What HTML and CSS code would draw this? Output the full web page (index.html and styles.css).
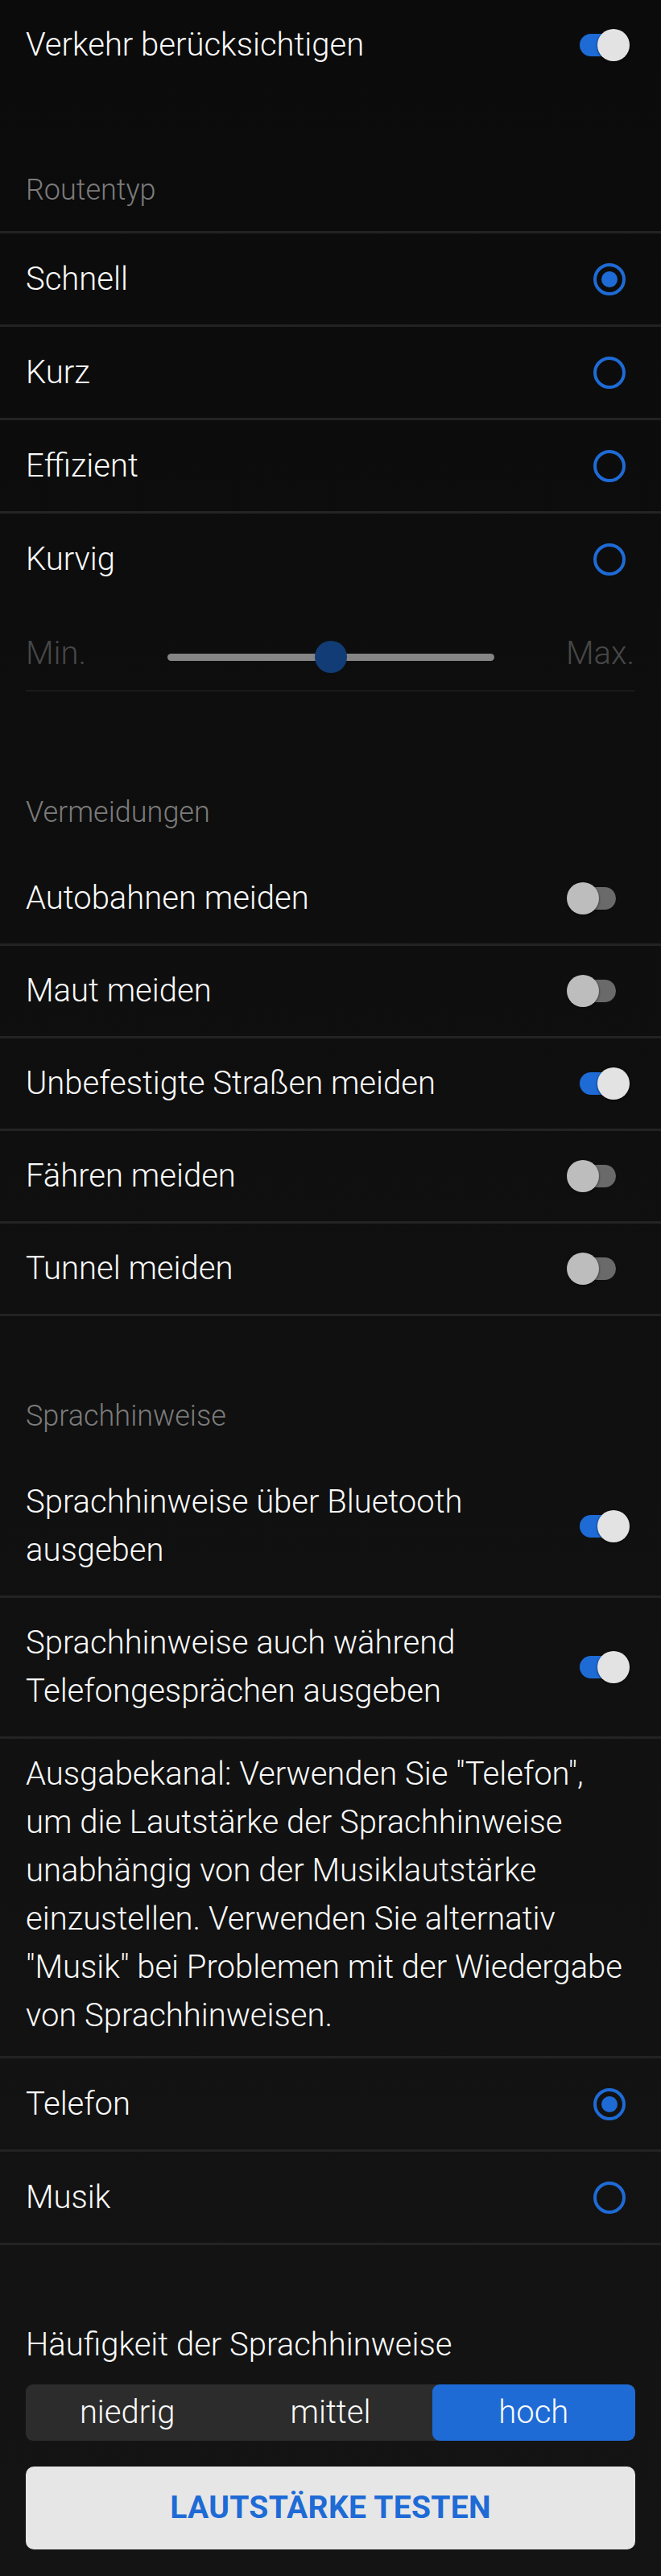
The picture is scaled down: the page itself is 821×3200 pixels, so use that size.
FILE: index.html
```html
<!doctype html>
<html lang="de">
<head>
    <meta charset="UTF-8">
    <title>Routeneinstellungen</title>
    <link rel="stylesheet" href="styles.css">
</head>
<body>
<div class="page">
    <!-- Verkehr -->
    <div class="row top-row">
        <span>Verkehr berücksichtigen</span>
        <span class="switch on"></span>
    </div>

    <!-- Routentyp -->
    <div class="section-title">Routentyp</div>
    <div class="route-list">
        <div class="row"><span>Schnell</span><span class="radio checked"></span></div>
        <div class="row"><span>Kurz</span><span class="radio"></span></div>
        <div class="row"><span>Effizient</span><span class="radio"></span></div>
        <div class="row"><span>Kurvig</span><span class="radio"></span></div>
    </div>
    <div class="slider-row">
        <span class="slider-label">Min.</span>
        <div class="slider"><span class="slider-thumb"></span></div>
        <span class="slider-label max">Max.</span>
    </div>

    <!-- Vermeidungen -->
    <div class="section-title">Vermeidungen</div>
    <div class="toggle-list">
        <div class="row"><span>Autobahnen meiden</span><span class="switch"></span></div>
        <div class="row"><span>Maut meiden</span><span class="switch"></span></div>
        <div class="row"><span>Unbefestigte Straßen meiden</span><span class="switch on"></span></div>
        <div class="row"><span>Fähren meiden</span><span class="switch"></span></div>
        <div class="row"><span>Tunnel meiden</span><span class="switch"></span></div>
    </div>

    <!-- Sprachhinweise -->
    <div class="section-title">Sprachhinweise</div>
    <div class="voice-list">
        <div class="row tall"><span>Sprachhinweise über Bluetooth<br>ausgeben</span><span class="switch on"></span></div>
        <div class="row tall"><span>Sprachhinweise auch während<br>Telefongesprächen ausgeben</span><span class="switch on"></span></div>
        <p class="note">Ausgabekanal: Verwenden Sie "Telefon",<br>um die Lautstärke der Sprachhinweise<br>unabhängig von der Musiklautstärke<br>einzustellen. Verwenden Sie alternativ<br>"Musik" bei Problemen mit der Wiedergabe<br>von Sprachhinweisen.</p>
        <div class="row"><span>Telefon</span><span class="radio checked"></span></div>
        <div class="row"><span>Musik</span><span class="radio"></span></div>
    </div>

    <!-- Häufigkeit -->
    <div class="freq-title">Häufigkeit der Sprachhinweise</div>
    <div class="segmented">
        <span class="seg">niedrig</span>
        <span class="seg">mittel</span>
        <span class="seg active">hoch</span>
    </div>
    <button class="test-btn">LAUTSTÄRKE TESTEN</button>
</div>
</body>
</html>
```

FILE: styles.css
```css
* {
    margin: 0;
    padding: 0;
    border: 0;
    box-sizing: border-box;
}

html {
    background: #131313;
}

body {
    font-family: Roboto, "Liberation Sans", sans-serif;
    font-weight: 300;
    font-size: 40px;
    line-height: 40px;
    color: #fafafa;
    background: linear-gradient(#0b0b0b, #141414);
}

.page {
    padding-bottom: 33px;
}

/* rows */
.row {
    display: flex;
    align-items: center;
    justify-content: space-between;
    height: 115px;
    padding: 0 39px 0 32px;
}

.top-row {
    height: 112px;
}

.route-list .row {
    height: 116px;
    border-top: 3px solid #232323;
}

.toggle-list .row,
.voice-list .row {
    border-bottom: 3px solid #232323;
}

.voice-list .row {
    height: 116px;
}

.voice-list .row.tall {
    height: auto;
    padding-top: 26px;
    padding-bottom: 26px;
    line-height: 60px;
}

.section-title {
    font-size: 36px;
    line-height: 36px;
    color: #7b7b7b;
    padding: 106px 32px 33px;
}

/* switch */
.switch {
    position: relative;
    width: 78px;
    height: 40px;
    flex-shrink: 0;
}

.switch:before {
    content: "";
    position: absolute;
    left: 16px;
    top: 6px;
    width: 45px;
    height: 28px;
    border-radius: 14px;
    background: #6a6a6a;
}

.switch:after {
    content: "";
    position: absolute;
    left: 0;
    top: 0;
    width: 40px;
    height: 40px;
    border-radius: 50%;
    background: #bdbdbd;
    box-shadow: 0 1px 3px rgba(0, 0, 0, 0.6);
}

.switch.on:before {
    background: #1e6bd6;
}

.switch.on:after {
    left: 38px;
    background: #e3e3e3;
}

/* radio */
.radio {
    display: flex;
    align-items: center;
    justify-content: center;
    width: 40px;
    height: 40px;
    margin-right: 5px;
    border: 4px solid #1e6bd6;
    border-radius: 50%;
    flex-shrink: 0;
}

.radio.checked:after {
    content: "";
    width: 20px;
    height: 20px;
    border-radius: 50%;
    background: #1e6bd6;
}

/* slider */
.slider-row {
    display: grid;
    grid-template-columns: 176px 406px 1fr;
    align-items: center;
    height: 108px;
    margin: 0 32px 26px;
    padding-top: 24px;
    border-bottom: 2px solid #1b1b1b;
}

.slider-label {
    color: #474747;
    margin-bottom: 8px;
}

.slider-label.max {
    justify-self: end;
    margin-right: 1px;
}

.slider {
    position: relative;
    height: 9px;
    border-radius: 5px;
    background: #858585;
}

.slider-thumb {
    position: absolute;
    left: 50%;
    top: 50%;
    width: 40px;
    height: 40px;
    margin: -20px 0 0 -20px;
    border-radius: 50%;
    background: #123c75;
}

/* note */
.note {
    line-height: 60px;
    padding: 14px 32px 20px;
    border-bottom: 3px solid #232323;
}

/* frequency */
.freq-title {
    padding: 104px 32px 0;
}

.segmented {
    display: grid;
    grid-template-columns: repeat(3, 1fr);
    height: 70px;
    margin: 29px 32px 0;
    background: #2c2c2c;
    border-radius: 9px;
    overflow: hidden;
}

.seg {
    display: flex;
    align-items: center;
    justify-content: center;
}

.seg.active {
    background: #1e6bd6;
    border-radius: 9px;
}

.test-btn {
    display: block;
    width: calc(100% - 64px);
    height: 103px;
    margin: 32px 32px 0;
    background: #e6e6e6;
    border-radius: 10px;
    font-family: Roboto, "Liberation Sans", sans-serif;
    font-weight: 700;
    font-size: 39px;
    line-height: 39px;
    letter-spacing: 0.3px;
    color: #1e6bd6;
}
```
